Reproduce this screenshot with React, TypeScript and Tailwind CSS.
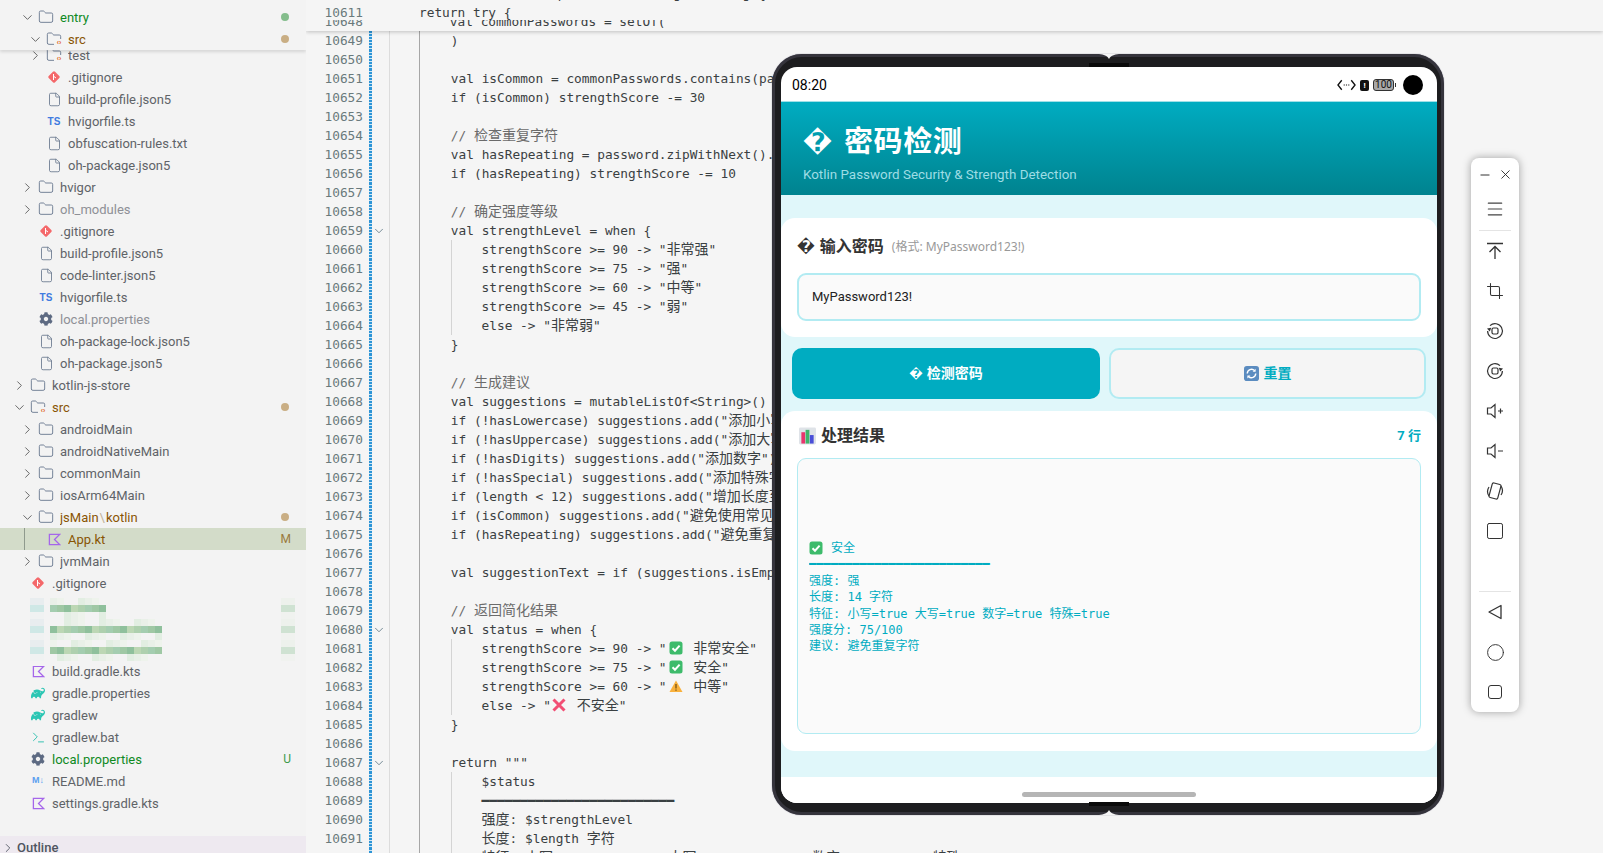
import { ChevronDown, ChevronRight, Circle, Crop, File, Folder, Menu, Minus, Square, Terminal, X } from 'lucide-react';
import { FaCog } from 'react-icons/fa';
import { SiGradle } from 'react-icons/si';

type Row = {
    level: number;
    name: string;
    icon: 'folder' | 'open' | 'src' | 'srcOpen' | 'file' | 'git' | 'ts' | 'gear' | 'kotlin' | 'gradle' | 'term' | 'md';
    tone?: 'added' | 'changed' | 'dim';
    badge?: string;
    dot?: 'green' | 'tan';
};

const treeTop: Row[] = [
    { level: 3, name: 'test', icon: 'src' },
    { level: 3, name: '.gitignore', icon: 'git' },
    { level: 3, name: 'build-profile.json5', icon: 'file' },
    { level: 3, name: 'hvigorfile.ts', icon: 'ts' },
    { level: 3, name: 'obfuscation-rules.txt', icon: 'file' },
    { level: 3, name: 'oh-package.json5', icon: 'file' },
    { level: 2, name: 'hvigor', icon: 'folder' },
    { level: 2, name: 'oh_modules', icon: 'folder', tone: 'dim' },
    { level: 2, name: '.gitignore', icon: 'git' },
    { level: 2, name: 'build-profile.json5', icon: 'file' },
    { level: 2, name: 'code-linter.json5', icon: 'file' },
    { level: 2, name: 'hvigorfile.ts', icon: 'ts' },
    { level: 2, name: 'local.properties', icon: 'gear', tone: 'dim' },
    { level: 2, name: 'oh-package-lock.json5', icon: 'file' },
    { level: 2, name: 'oh-package.json5', icon: 'file' },
    { level: 1, name: 'kotlin-js-store', icon: 'folder' },
    { level: 1, name: 'src', icon: 'srcOpen', tone: 'changed', dot: 'tan' },
    { level: 2, name: 'androidMain', icon: 'folder' },
    { level: 2, name: 'androidNativeMain', icon: 'folder' },
    { level: 2, name: 'commonMain', icon: 'folder' },
    { level: 2, name: 'iosArm64Main', icon: 'folder' },
    { level: 2, name: 'jsMain\\kotlin', icon: 'open', tone: 'changed', dot: 'tan' },
    { level: 3, name: 'App.kt', icon: 'kotlin', tone: 'changed', badge: 'M' },
    { level: 2, name: 'jvmMain', icon: 'folder' },
    { level: 1, name: '.gitignore', icon: 'git' },
];

const treeBottom: Row[] = [
    { level: 1, name: 'build.gradle.kts', icon: 'kotlin' },
    { level: 1, name: 'gradle.properties', icon: 'gradle' },
    { level: 1, name: 'gradlew', icon: 'gradle' },
    { level: 1, name: 'gradlew.bat', icon: 'term' },
    { level: 1, name: 'local.properties', icon: 'gear', tone: 'added', badge: 'U' },
    { level: 1, name: 'README.md', icon: 'md' },
    { level: 1, name: 'settings.gradle.kts', icon: 'kotlin' },
];

const codeLines = [
    '    )',
    '',
    '    val isCommon = commonPasswords.contains(password)',
    '    if (isCommon) strengthScore -= 30',
    '',
    '    // 检查重复字符',
    '    val hasRepeating = password.zipWithNext().any { it.first == it.second }',
    '    if (hasRepeating) strengthScore -= 10',
    '',
    '    // 确定强度等级',
    '    val strengthLevel = when {',
    '        strengthScore >= 90 -> "非常强"',
    '        strengthScore >= 75 -> "强"',
    '        strengthScore >= 60 -> "中等"',
    '        strengthScore >= 45 -> "弱"',
    '        else -> "非常弱"',
    '    }',
    '',
    '    // 生成建议',
    '    val suggestions = mutableListOf<String>()',
    '    if (!hasLowercase) suggestions.add("添加小写字母")',
    '    if (!hasUppercase) suggestions.add("添加大写字母")',
    '    if (!hasDigits) suggestions.add("添加数字")',
    '    if (!hasSpecial) suggestions.add("添加特殊字符")',
    '    if (length < 12) suggestions.add("增加长度至12位")',
    '    if (isCommon) suggestions.add("避免使用常见密码")',
    '    if (hasRepeating) suggestions.add("避免重复字符")',
    '',
    '    val suggestionText = if (suggestions.isEmpty()) "无" else suggestions.joinToString()',
    '',
    '    // 返回简化结果',
    '    val status = when {',
    '        strengthScore >= 90 -> "✅ 非常安全"',
    '        strengthScore >= 75 -> "✅ 安全"',
    '        strengthScore >= 60 -> "⚠ 中等"',
    '        else -> "❌ 不安全"',
    '    }',
    '',
    '    return """',
    '        $status',
    '        ━━━━━━━━━━━━━━━━━━━━━━━━━',
    '        强度: $strengthLevel',
    '        长度: $length 字符',
    '        特征: 小写=$hasLowercase 大写=$hasUppercase 数字=$hasDigits 特殊=$hasSpecial',
];

const foldedLines = [10659, 10680, 10687];

const CheckEmoji = ({ className }: { className: string }) => (
    <svg viewBox="0 0 14 14" className={className}>
        <rect x="0.5" y="0.5" width="13" height="13" rx="2.5" fill="#3dbb6b" />
        <path d="M3.5 7.2 6 9.7 10.6 4.6" fill="none" stroke="#fff" strokeWidth="2" />
    </svg>
);

const WarnEmoji = () => (
    <svg viewBox="0 0 14 14" className="inline-block w-[14px] h-[14px] align-[-2px] ml-[2px] mr-[3px]">
        <path d="M7 1.5 13.5 13H.5z" fill="#f9b13c" />
        <path d="M7 5v4.5M7 10.5v1.3" stroke="#6b4a12" strokeWidth="1.2" />
    </svg>
);

const CrossEmoji = () => (
    <svg viewBox="0 0 14 14" className="inline-block w-[14px] h-[14px] align-[-2px] ml-[1px] mr-[3px]">
        <path d="M1.5 1.5 12.5 12.5M12.5 1.5 1.5 12.5" stroke="#f24e74" strokeWidth="3" />
    </svg>
);

// CJK runs are wider than the latin cell, so they get their own size
const CodeText = ({ text }: { text: string }) => (
    <>
        {text.split(/([\u4e00-\u9fff]+|✅|⚠|❌)/).map((part, i) => {
            if (part === '✅') return <CheckEmoji key={i} className="inline-block w-[14px] h-[14px] align-[-2px] ml-[2px] mr-[3px]" />;
            if (part === '⚠') return <WarnEmoji key={i} />;
            if (part === '❌') return <CrossEmoji key={i} />;
            if (/[\u4e00-\u9fff]/.test(part)) {
                return <span key={i} className="font-['Noto_Sans_CJK_SC',sans-serif] text-[14px] leading-none">{part}</span>;
            }
            return <span key={i}>{part}</span>;
        })}
    </>
);

const codeTone = (line: string) => {
    if (line.trim().startsWith('//')) return 'text-[#6b6b6b]';
    return 'text-[#3a4042]';
};

const CodeRow = ({ no, line, sticky }: { no: number; line: string; sticky?: boolean }) => {
    const guided = line.startsWith('        ');
    return (
        <div className="flex h-[19px] leading-[19px] whitespace-pre font-['DejaVu_Sans_Mono',monospace] text-[12.8px]">
            <div className="w-[57px] shrink-0 text-right text-[#6a7a7c]">{no}</div>
            <div className="w-[6px] shrink-0" />
            {sticky ? (
                <div className="w-[50px] shrink-0" />
            ) : (
                <>
                    <div className="w-[3px] shrink-0 bg-[repeating-linear-gradient(180deg,#2d94d6_0px,#2d94d6_2px,#cfe8f6_2px,#cfe8f6_3px)]" />
                    <div className="w-[18px] shrink-0 border-r border-[#dcdcdc] flex items-center justify-start">
                        {foldedLines.includes(no) && <ChevronDown size={14} strokeWidth={1.3} className="text-[#4e6a78]" />}
                    </div>
                    <div className="w-[30px] shrink-0 border-r border-[#a6a6a6]" />
                </>
            )}
            {guided ? (
                <div className={`flex ${codeTone(line)}`}>
                    <div className="w-[30.8px] shrink-0" />
                    <div className="border-l border-[#d4d4d4] pl-[29.8px]"><CodeText text={line.slice(8)} /></div>
                </div>
            ) : (
                <div className={codeTone(line)}><CodeText text={line} /></div>
            )}
        </div>
    );
};

const SrcFolder = () => (
    <span className="relative block w-[16px] h-[16px]">
        <Folder size={16} strokeWidth={1.4} className="text-[#6b7a90]" />
        <span className="absolute right-[-2px] bottom-[0px] w-[10px] h-[8px] bg-[#f3f3f3] text-[#e2682c] text-[7px] leading-[8px] font-bold text-center font-['Liberation_Sans',sans-serif]">{'‹›'}</span>
    </span>
);

const GitIcon = () => (
    <svg viewBox="0 0 14 14" className="w-[14px] h-[14px]">
        <rect x="2.5" y="2.5" width="9" height="9" rx="1.5" transform="rotate(45 7 7)" fill="#f4686a" />
        <path d="M6.5 4v6M6.5 6.2 9 8" stroke="#fff" strokeWidth="1" fill="none" />
    </svg>
);

const KotlinIcon = () => (
    <svg viewBox="0 0 14 14" className="w-[13px] h-[13px]">
        <path d="M1.5 1.5H12.5L7 7l5.5 5.5H1.5z" fill="none" stroke="#a566ea" strokeWidth="1.4" />
    </svg>
);

const TreeIcon = ({ icon }: { icon: Row['icon'] }) => {
    switch (icon) {
        case 'folder':
        case 'open':
            return <Folder size={16} strokeWidth={1.4} className="text-[#6b7a90]" />;
        case 'src':
        case 'srcOpen':
            return <SrcFolder />;
        case 'file':
            return <File size={15} strokeWidth={1.4} className="text-[#6b7a90]" />;
        case 'git':
            return <GitIcon />;
        case 'ts':
            return <span className="text-[10px] font-bold text-[#3f7be0] font-['Liberation_Sans',sans-serif]">TS</span>;
        case 'gear':
            return <FaCog size={14} className="text-[#5d6a82]" />;
        case 'kotlin':
            return <KotlinIcon />;
        case 'gradle':
            return <SiGradle size={14} className="text-[#2cc6b4]" />;
        case 'term':
            return <Terminal size={15} strokeWidth={1.5} className="text-[#2bbfae]" />;
        case 'md':
            return <span className="text-[9px] font-bold text-[#5a9ff0] font-['Liberation_Sans',sans-serif]">M↓</span>;
    }
};

const toneClass = (row: Row) => {
    if (row.tone === 'added') return 'text-[#0f8a1f]';
    if (row.tone === 'changed') return 'text-[#895503]';
    if (row.tone === 'dim') return 'text-[#8e9096]';
    return 'text-[#5f6368]';
};

const TreeRow = ({ row, active }: { row: Row; active?: boolean }) => {
    const isFolder = ['folder', 'open', 'src', 'srcOpen'].includes(row.icon);
    const expanded = row.icon === 'open' || row.icon === 'srcOpen';
    const [head, tail] = row.name.split('\\');
    return (
        <div
            className={`relative flex items-center h-[22px] shrink-0 pr-[17px] ${active ? 'bg-[#d3dcc9]' : ''}`}
            style={{ paddingLeft: 3 + row.level * 8 }}
        >
            {active && <div className="absolute left-[24px] top-0 bottom-0 w-px bg-[#8f9a8d]" />}
            <div className="w-[16px] flex justify-center shrink-0">
                {isFolder && (expanded
                    ? <ChevronDown size={15} strokeWidth={1.4} className="text-[#555]" />
                    : <ChevronRight size={15} strokeWidth={1.4} className="text-[#555]" />)}
            </div>
            <div className="w-[16px] ml-[3px] flex justify-center items-center shrink-0"><TreeIcon icon={row.icon} /></div>
            <span className={`ml-[6px] pt-[1px] flex-1 truncate ${toneClass(row)}`}>
                {head}
                {tail && <span className="mx-[1px] text-[#c2b49c]">\</span>}
                {tail}
            </span>
            {row.dot === 'green' && <span className="w-[8px] h-[8px] rounded-full bg-[#84bd8c]" />}
            {row.dot === 'tan' && <span className="w-[8px] h-[8px] rounded-full bg-[#c9ae84]" />}
            {row.badge && <span className={`-mr-[2px] text-[12px] ${row.tone === 'added' ? 'text-[#3d9a4a]' : 'text-[#9a7a3c]'}`}>{row.badge}</span>}
        </div>
    );
};

const bandGreens = ['#aed0ae', '#9fc8a4', '#bcd7b4', '#a4cdb0', '#8fc09c'];
const paleGreens = ['#f3f3f3', '#e9f0e8', '#f3f3f3', '#e2eee2', '#eef3ec'];

// pixelated (censored) file row, cut into 7px cells like the mosaic in the picture
const MosaicRow = ({ seed, offset, cells }: { seed: number; offset: string; cells: number }) => {
    const strip = (colours: string[], shift: number) => (
        <div className={`flex h-[7px] ${offset}`}>
            {Array.from({ length: cells }, (_, i) => (
                <div key={i} className="w-[7px] h-[7px]" style={{ backgroundColor: colours[(i * 3 + seed + shift) % colours.length] }} />
            ))}
        </div>
    );
    return (
        <div className="relative flex h-[21px] pl-[30px] pr-[11px]">
            <div className="w-[14px] h-[21px] flex flex-col shrink-0">
                <div className="h-[7px] bg-[#e8edef]" />
                <div className="h-[7px] bg-[#cfe8e6]" />
                <div className="h-[7px] bg-[#f0f2f2]" />
            </div>
            <div className="flex-1 flex flex-col">
                {strip(paleGreens, 0)}
                {strip(bandGreens, 2)}
                {strip(paleGreens, 1)}
            </div>
            <div className="w-[14px] h-[21px] flex flex-col shrink-0">
                <div className="h-[7px] bg-[#edf1ec]" />
                <div className="h-[7px] bg-[#cfe2d2]" />
                <div className="h-[7px] bg-[#f0f2ef]" />
            </div>
        </div>
    );
};

const Sidebar = () => (
    <div className="w-[306px] shrink-0 h-full flex flex-col bg-[#f3f3f3] text-[13px] font-['Roboto',sans-serif] overflow-hidden">
        <div className="relative z-10 h-[50px] shrink-0 flex flex-col justify-end bg-[#f3f3f3] shadow-[0_2px_3px_rgba(0,0,0,0.12)]">
            <TreeRow row={{ level: 2, name: 'entry', icon: 'open', tone: 'added', dot: 'green' }} />
            <TreeRow row={{ level: 3, name: 'src', icon: 'srcOpen', tone: 'changed', dot: 'tan' }} />
        </div>
        <div className="-mt-[6px] flex flex-col flex-1 min-h-0">
            {treeTop.map((row, i) => <TreeRow key={i} row={row} active={row.name === 'App.kt'} />)}
            <div className="relative z-[1] h-[66px] shrink-0">
                <div className="absolute inset-x-0 top-0 -bottom-[6px] bg-[#f3f3f3] pt-[4px]">
                    <MosaicRow seed={1} offset="pl-[6px]" cells={8} />
                    <MosaicRow seed={2} offset="pl-[6px]" cells={16} />
                    <MosaicRow seed={4} offset="pl-[6px]" cells={16} />
                </div>
            </div>
            {treeBottom.map((row, i) => <TreeRow key={i} row={row} />)}
        </div>
        <div className="h-[17px] shrink-0 bg-[#eee9f0] flex items-start pl-[1px] pt-[3px] text-[#4f5560] font-medium text-[13px] leading-[17px]">
            <ChevronRight size={14} strokeWidth={1.5} className="mt-[2px]" />
            <span className="ml-[2px]">Outline</span>
        </div>
    </div>
);

const Editor = () => (
    <div className="flex-1 h-full bg-[#f5f5f5] overflow-hidden">
        <div className="relative z-10 h-[31px] overflow-hidden bg-[#f5f5f5] shadow-[0_1px_4px_rgba(0,0,0,0.22)]">
            <div className="-mt-[16px] relative z-[2] bg-[#f5f5f5]"><CodeRow sticky no={10610} line="fun checkPassword(password: String): String {" /></div>
            <div className="relative z-[2] h-[17px] overflow-hidden bg-[#f5f5f5]"><CodeRow sticky no={10611} line="return try {" /></div>
            <div className="-mt-[8px]"><CodeRow sticky no={10648} line="    val commonPasswords = setOf(" /></div>
        </div>
        {codeLines.map((line, i) => <CodeRow key={i} no={10649 + i} line={line} />)}
    </div>
);

const Diamond = ({ className }: { className: string }) => (
    <span className={`font-['DejaVu_Sans',sans-serif] ${className}`}>{'\uFFFD'}</span>
);

const ResetIcon = () => (
    <svg viewBox="0 0 16 16" className="w-[15px] h-[15px]">
        <rect width="16" height="16" rx="3" fill="#5b8cc0" />
        <path d="M3.5 8a4.5 4.5 0 0 1 7.7-3.1M12.5 8a4.5 4.5 0 0 1-7.7 3.1" fill="none" stroke="#fff" strokeWidth="1.5" />
        <path d="M12.4 2.8v3.2H9.2zM3.6 13.2V10h3.2z" fill="#fff" />
    </svg>
);

const ChartIcon = () => (
    <svg viewBox="0 0 18 18" className="w-[17px] h-[18px]">
        <rect width="18" height="18" rx="1.5" fill="#dfe3e8" />
        <rect x="2.5" y="5" width="4" height="12" fill="#e8356c" />
        <rect x="7" y="2.5" width="4" height="14.5" fill="#3fb56a" />
        <rect x="11.5" y="8" width="4" height="9" fill="#4a4fd8" />
    </svg>
);

const StatusIcons = () => (
    <div className="flex items-center">
        <svg viewBox="0 0 20 12" className="w-[19px] h-[12px]">
            <path d="M5 1 1 6l4 5M15 1l4 5-4 5" fill="none" stroke="#111" strokeWidth="1.4" />
            <path d="M7 6h1.2M9.4 6h1.2M11.8 6H13" stroke="#111" strokeWidth="1.2" />
        </svg>
        <div className="ml-[4px] w-[9px] h-[11px] rounded-[2px] bg-[#111] text-white text-[8px] leading-[11px] font-bold text-center">!</div>
        <div className="ml-[4px] w-[21px] h-[12px] rounded-[3px] border border-[#333] bg-[#a8a8a8] text-[#111] text-[10px] leading-[10px] text-center font-['Roboto',sans-serif]">100</div>
        <div className="ml-[1px] w-px h-[4px] bg-[#333]" />
        <div className="ml-[7px] w-[20px] h-[20px] rounded-full bg-black" />
    </div>
);

const Phone = () => (
    <div className="absolute left-[772px] top-[54px] w-[672px] h-[761px] rounded-[30px] bg-[#1d1d1f] border-[3px] border-[#35343c] pt-[10px] pl-[6px] pr-[4px] pb-[9px] shadow-[0_0_1px_#4b4860]">
        <svg viewBox="0 0 20 6" className="absolute left-[324px] -top-[3px] w-[20px] h-[6px]">
            <path d="M0 0h20c-5 .6-8 1.5-10 5C8 1.5 5 .6 0 0z" fill="#f5f5f5" />
        </svg>
        <div className="absolute left-[314px] top-[6px] w-[40px] h-[4px] bg-[#0a0a0a]" />
        <svg viewBox="0 0 20 6" className="absolute left-[324px] -bottom-[3px] w-[20px] h-[6px]">
            <path d="M0 6h20c-5-.6-8-1.5-10-5C8 4.5 5 5.4 0 6z" fill="#f5f5f5" />
        </svg>
        <div className="absolute left-[314px] bottom-[6px] w-[40px] h-[4px] bg-[#0a0a0a]" />
        <div className="w-full h-full rounded-[16px] overflow-hidden flex flex-col bg-white font-['Roboto','Noto_Sans_CJK_SC',sans-serif]">
            <div className="h-[35px] shrink-0 flex items-center justify-between pl-[11px] pr-[14px] pt-[2px] border-b border-[#9fe0e8]">
                <span className="text-[14px] text-black">08:20</span>
                <StatusIcons />
            </div>
            <div className="h-[93px] shrink-0 bg-gradient-to-b from-[#00acc1] to-[#00838f] pl-[22px] pt-[18px]">
                <div className="flex items-center h-[44px] text-white">
                    <Diamond className="text-[26px] leading-none font-bold" />
                    <span className="ml-[12px] text-[29px] leading-none font-bold tracking-[0.6px]">密码检测</span>
                </div>
                <div className="mt-[2px] text-[13.4px] leading-[18px] text-[#9edde5]">Kotlin Password Security &amp; Strength Detection</div>
            </div>
            <div className="flex-1 bg-[#e0f7fa] pt-[23px] flex flex-col">
                <div className="h-[119px] shrink-0 bg-white rounded-[14px] px-[16px] pt-[17px]">
                    <div className="flex items-center h-[24px]">
                        <Diamond className="text-[16px] font-bold text-[#333]" />
                        <span className="ml-[5px] text-[16px] font-bold text-[#333]">输入密码</span>
                        <span className="ml-[8px] text-[12px] text-[#999] font-['Noto_Sans','Noto_Sans_CJK_SC',sans-serif]">(格式: MyPassword123!)</span>
                    </div>
                    <div className="mt-[14px] h-[48px] rounded-[9px] border-2 border-[#b2ebf2] bg-[#fafafa] flex items-center pl-[13px] pb-[1px] text-[13px] text-[#222]">MyPassword123!</div>
                </div>
                <div className="flex gap-[9px] pl-[11px] pr-[11px] mt-[11px] h-[51px] shrink-0">
                    <div className="w-[308px] rounded-[10px] bg-[#00acc1] flex items-center justify-center text-white text-[14px] font-bold">
                        <Diamond className="text-[12px]" />
                        <span className="ml-[4px]">检测密码</span>
                    </div>
                    <div className="flex-1 rounded-[10px] border-2 border-[#b2ebf2] bg-[#f5f5f5] flex items-center justify-center text-[#00acc1] text-[14px] font-bold">
                        <ResetIcon />
                        <span className="ml-[5px]">重置</span>
                    </div>
                </div>
                <div className="mt-[12px] h-[340px] shrink-0 bg-white rounded-[14px] px-[16px] pt-[14px]">
                    <div className="flex items-center justify-between h-[22px]">
                        <div className="flex items-center pl-[2px]">
                            <ChartIcon />
                            <span className="ml-[5px] text-[16px] font-bold text-[#333]">处理结果</span>
                        </div>
                        <span className="text-[13px] font-bold text-[#00acc1]">7 行</span>
                    </div>
                    <div className="mt-[11px] h-[276px] rounded-[9px] border border-[#b2ebf2] bg-[#fafafa] pl-[11px] pt-[80px] font-['DejaVu_Sans_Mono','Noto_Sans_CJK_SC',monospace] text-[12px] leading-[16.3px] text-[#00acc1] whitespace-pre">
                        <div className="flex items-center h-[18px]">
                            <CheckEmoji className="w-[14px] h-[14px]" />
                            <span className="ml-[8px]">安全</span>
                        </div>
                        <div className="h-[17px] -mt-[1px] overflow-hidden leading-[16px]">━━━━━━━━━━━━━━━━━━━━━━━━━</div>
                        <div>强度: 强</div>
                        <div>长度: 14 字符</div>
                        <div>特征: 小写=true 大写=true 数字=true 特殊=true</div>
                        <div>强度分: 75/100</div>
                        <div>建议: 避免重复字符</div>
                    </div>
                </div>
            </div>
            <div className="h-[26px] shrink-0 bg-white flex justify-center pt-[15px]">
                <div className="w-[174px] h-[5px] rounded-full bg-[#b5b5b5]" />
            </div>
        </div>
    </div>
);

const ToolIcon = ({ children }: { children: React.ReactNode }) => (
    <div className="h-[40px] shrink-0 flex items-center justify-center text-[#333]">{children}</div>
);

const Toolbar = () => (
    <div className="absolute left-[1471px] top-[158px] w-[48px] h-[554px] rounded-[8px] bg-white shadow-[0_0_8px_rgba(0,0,0,0.35)] flex flex-col">
        <div className="h-[30px] shrink-0 flex items-center justify-between pl-[7px] pr-[6px] pt-[3px] text-[#222]">
            <Minus size={14} strokeWidth={1.6} />
            <X size={15} strokeWidth={1.4} />
        </div>
        <div className="h-[42px] shrink-0 flex items-center justify-center text-[#444]"><Menu size={20} strokeWidth={1.4} /></div>
        <div className="mx-[8px] h-px shrink-0 bg-[#e4e4e4]" />
        <ToolIcon>
            <svg viewBox="0 0 18 18" className="w-[18px] h-[18px]" fill="none" stroke="currentColor" strokeWidth="1.3">
                <path d="M1 1.5h16M9 17V4.5M3.5 10 9 4.5l5.5 5.5" />
            </svg>
        </ToolIcon>
        <ToolIcon><Crop size={18} strokeWidth={1.4} /></ToolIcon>
        <ToolIcon>
            <svg viewBox="0 0 18 18" className="w-[18px] h-[18px]" fill="none" stroke="currentColor" strokeWidth="1.2">
                <path d="M1.6 9A7.4 7.4 0 1 0 4 3.6" />
                <path d="M1 6.4 3.8 9.6 5.2 5.8z" fill="currentColor" stroke="none" />
                <rect x="6" y="6" width="6" height="6" rx="1.4" />
            </svg>
        </ToolIcon>
        <ToolIcon>
            <svg viewBox="0 0 18 18" className="w-[18px] h-[18px]" fill="none" stroke="currentColor" strokeWidth="1.2">
                <path d="M16.4 9A7.4 7.4 0 1 1 14 3.6" />
                <path d="M17 6.4 14.2 9.6 12.8 5.8z" fill="currentColor" stroke="none" />
                <rect x="6" y="6" width="6" height="6" rx="1.4" />
            </svg>
        </ToolIcon>
        <ToolIcon>
            <svg viewBox="0 0 18 18" className="w-[18px] h-[18px]" fill="none" stroke="currentColor" strokeWidth="1.2">
                <path d="M9 2.5v13L5 12H1.5V6H5zM12 9h5M14.5 6.5v5" />
            </svg>
        </ToolIcon>
        <ToolIcon>
            <svg viewBox="0 0 18 18" className="w-[18px] h-[18px]" fill="none" stroke="currentColor" strokeWidth="1.2">
                <path d="M9 2.5v13L5 12H1.5V6H5zM12 9h5" />
            </svg>
        </ToolIcon>
        <ToolIcon>
            <svg viewBox="0 0 18 18" className="w-[18px] h-[18px]" fill="none" stroke="currentColor" strokeWidth="1.2">
                <rect x="4.5" y="1.5" width="9" height="15" rx="1.5" transform="rotate(15 9 9)" />
                <path d="M3 5C1 8 1 11 3 14M15 4c2 3 2 6 0 9" />
            </svg>
        </ToolIcon>
        <ToolIcon><Square size={20} strokeWidth={1.2} /></ToolIcon>
        <div className="flex-1" />
        <div className="mx-[8px] h-px shrink-0 bg-[#e4e4e4]" />
        <ToolIcon>
            <svg viewBox="0 0 16 16" className="w-[16px] h-[16px]" fill="none" stroke="currentColor" strokeWidth="1.3">
                <path d="M14 1.5v13L2 8z" strokeLinejoin="round" />
            </svg>
        </ToolIcon>
        <ToolIcon><Circle size={19} strokeWidth={1.2} /></ToolIcon>
        <ToolIcon>
            <div className="w-[14px] h-[14px] rounded-[3px] border border-[#333]" />
        </ToolIcon>
    </div>
);

const App = () => (
    <div className="relative flex w-full h-screen overflow-hidden bg-[#f5f5f5]">
        <Sidebar />
        <Editor />
        <Phone />
        <Toolbar />
    </div>
);

export default App;
